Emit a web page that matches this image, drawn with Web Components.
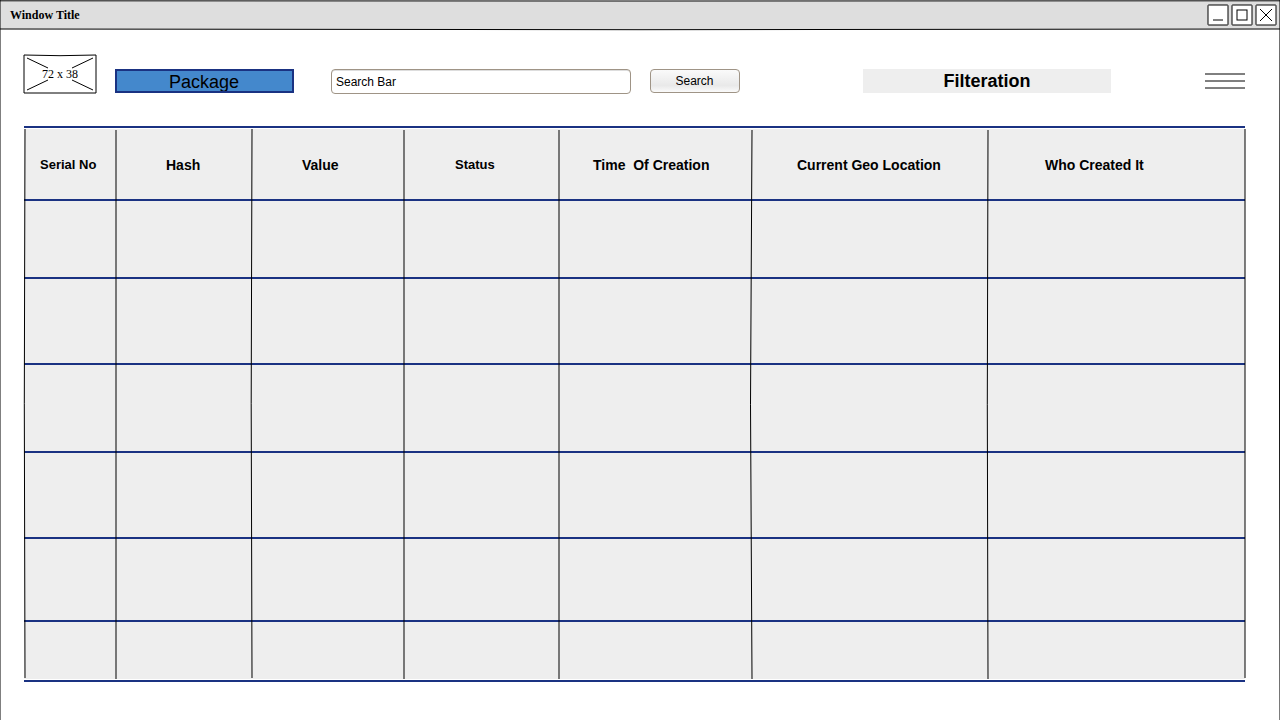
<!DOCTYPE html>
<html lang="en">
<head>
<meta charset="utf-8">
<title>Window Title</title>
<style>
  body { margin: 0; background: #fff; color: #000; font-family: "Liberation Sans", Arial, sans-serif; }
</style>
</head>
<body>
<app-window>
  <title-bar slot="title">Window Title</title-bar>
  <tool-bar>
    <image-placeholder label="72 x 38"></image-placeholder>
    <action-button kind="primary">Package</action-button>
    <search-box label="Search Bar"></search-box>
    <action-button kind="small">Search</action-button>
    <action-button kind="filter">Filteration</action-button>
    <menu-button></menu-button>
  </tool-bar>
  <package-table></package-table>
</app-window>

<script>
class BaseElement extends HTMLElement {
  constructor() {
    super();
    this.attachShadow({ mode: "open" }).innerHTML = this.template();
  }
}

customElements.define("app-window", class extends BaseElement {
  template() {
    return `
      <style>
        :host { display: block; position: relative; min-height: 100vh; overflow: hidden; }
        main { display: flex; flex-direction: column; gap: 32px; padding: 24px 35px 38px 24px; }
        .frame { position: absolute; inset: 0; width: 100%; height: 100%; pointer-events: none; }
        path { fill: none; stroke: #000; }
      </style>
      <slot name="title"></slot>
      <main><slot></slot></main>
      <svg class="frame" viewBox="0 0 1280 720" preserveAspectRatio="none" aria-hidden="true">
        <path d="M0 0V720M1280 0Q1279 360 1280 720"/>
      </svg>`;
  }
});

customElements.define("title-bar", class extends BaseElement {
  template() {
    return `
      <style>
        :host { display: block; position: relative; height: 30px; }
        .shape { position: absolute; inset: 0; width: 100%; height: 100%; overflow: visible; }
        header { position: relative; display: flex; align-items: center; justify-content: space-between; height: 30px; padding: 0 3px 0 10px; box-sizing: border-box; }
        h1 { margin: 0; font: bold 12px/14px "Liberation Serif", "Times New Roman", serif; }
        nav { display: flex; gap: 2px; }
        button { display: block; width: 22px; height: 22px; padding: 0; border: 0; background: none; }
        button svg { display: block; fill: none; stroke: #000; }
        rect.box { fill: #fff; }
      </style>
      <svg class="shape" viewBox="0 0 1280 30" preserveAspectRatio="none" aria-hidden="true">
        <path d="M0 1H1280V29Q640 30.2 0 29Z" fill="#dedede"/>
        <path d="M0 .8Q640 1.2 1280 .8M0 29Q640 30.4 1280 29" fill="none" stroke="#000"/>
      </svg>
      <header>
        <h1><slot></slot></h1>
        <nav>
          <button type="button" aria-label="Minimize"><svg width="22" height="22"><rect class="box" x="1" y="1" width="20" height="20" rx=".5"/><path d="M6 16H16"/></svg></button>
          <button type="button" aria-label="Maximize"><svg width="22" height="22"><rect class="box" x="1" y="1" width="20" height="20" rx=".5"/><rect x="6" y="6" width="10" height="10"/></svg></button>
          <button type="button" aria-label="Close"><svg width="22" height="22"><rect class="box" x="1" y="1" width="20" height="20" rx=".5"/><path d="M5 5L17 17M17 5L5 17"/></svg></button>
        </nav>
      </header>`;
  }
});

customElements.define("tool-bar", class extends BaseElement {
  template() {
    return `
      <style>
        :host { display: grid; align-items: start;
          grid-template-columns: 73px 18px 179px 37px 300px 19px 90px 123fr 248px 94fr 40px; }
        ::slotted(*) { margin-top: 15px; }
        ::slotted(:nth-child(1)) { grid-column: 1; margin-top: 0; }
        ::slotted(:nth-child(2)) { grid-column: 3; }
        ::slotted(:nth-child(3)) { grid-column: 5; }
        ::slotted(:nth-child(4)) { grid-column: 7; }
        ::slotted(:nth-child(5)) { grid-column: 9; }
        ::slotted(:nth-child(6)) { grid-column: 11; }
      </style>
      <slot></slot>`;
  }
});

customElements.define("image-placeholder", class extends BaseElement {
  template() {
    return `
      <style>
        :host { display: block; height: 40px; }
        svg { display: block; fill: none; stroke: #000; overflow: visible; }
        text { fill: #000; stroke: none; font: 12px "Liberation Serif", "Times New Roman", serif; text-anchor: middle; }
      </style>
      <svg width="73" height="40" role="img">
        <path d="M0 1Q36 2.4 72 1V39H0Z"/>
        <path d="M3 4L24 14M69 4L48 14M3 36L24 26M69 36L48 26"/>
        <text x="36" y="24">${this.getAttribute("label")}</text>
      </svg>`;
  }
});

customElements.define("action-button", class extends BaseElement {
  template() {
    return `
      <style>
        :host { display: block; }
        button { display: block; width: 100%; height: 24px; margin: 0; padding: 0; box-sizing: border-box; border: 0; color: #000; text-align: center; font: 18px/20px "Liberation Sans", Arial, sans-serif; }
        :host([kind="primary"]) button { background: #4488cc; border: 2px solid #1a3282; }
        :host([kind="small"]) button { padding-right: 1px; border: 1px solid #9f9486; border-radius: 4px; background: linear-gradient(#fafafa, #eeeeee 50%, #e9e9e9 70%, #fafafa); font-size: 12px; }
        :host([kind="filter"]) button { background: #eee; font-weight: bold; }
        :host([kind="primary"]) span { display: block; height: 19px; padding-right: 1px; overflow: hidden; }
      </style>
      <button type="button"><span><slot></slot></span></button>`;
  }
});

customElements.define("search-box", class extends BaseElement {
  template() {
    const label = this.getAttribute("label");
    return `
      <style>
        :host { display: block; }
        input { display: block; width: 100%; height: 25px; box-sizing: border-box; margin: 0; padding: 1px 4px 0; border: 1px solid #9f9486; border-radius: 4px; background: #fff; box-shadow: inset 0 1px #ddd; color: #000; font: 12px "Liberation Sans", Arial, sans-serif; outline: 0; }
      </style>
      <input type="text" aria-label="${label}" value="${label}">`;
  }
});

customElements.define("menu-button", class extends BaseElement {
  template() {
    return `
      <style>
        :host { display: block; }
        button { display: block; width: 40px; height: 24px; padding: 0; border: 0; background: none; }
        svg { display: block; stroke: #000; }
      </style>
      <button type="button" aria-label="Menu"><svg width="40" height="24"><path d="M0 5H40M0 12H40M0 19H40"/></svg></button>`;
  }
});

customElements.define("package-table", class extends BaseElement {
  template() {
    // title, column width, text inset, text size
    const columns = [
      ["Serial No", 92, 16, 13],
      ["Hash", 136, 50, 14],
      ["Value", 152, 50, 14],
      ["Status", 155, 51, 13],
      ["Time  Of Creation", 193, 34, 14],
      ["Current Geo Location", 236, 45, 14],
      ["Who Created It", 257, 57, 14]
    ];
    const total = columns.reduce((sum, c) => sum + c[1], 0);
    const rows = [78, 86, 88, 86, 83, 57];
    return `
      <style>
        :host { display: block; position: relative; border: solid #1a3282; border-width: 2px 0; padding: 1px 0; }
        table { width: 100%; table-layout: fixed; border-spacing: 0; background: #eee; }
        tr { height: var(--h); }
        th, td { box-sizing: border-box; padding: 0; border-bottom: 2px solid #1a3282; vertical-align: middle; }
        th { text-align: left; white-space: pre; font-weight: bold; line-height: 18px; padding-top: 2px; }
        tbody tr:last-child td { border-bottom: 0; }
        svg { position: absolute; inset: 1px 0; width: 100%; height: calc(100% - 2px); overflow: visible; pointer-events: none; fill: none; stroke: #000; }
      </style>
      <table>
        <colgroup>${columns.map(c => `<col style="width:${c[1] / total * 100}%">`).join("")}</colgroup>
        <thead><tr style="--h:72px">${columns.map(c => `<th scope="col" style="padding-left:${c[2]}px;font-size:${c[3]}px">${c[0]}</th>`).join("")}</tr></thead>
        <tbody>${rows.map(h => `<tr style="--h:${h}px">${"<td></td>".repeat(columns.length)}</tr>`).join("")}</tbody>
      </table>
      <svg viewBox="0 0 1221 550" preserveAspectRatio="none" aria-hidden="true">
        <path d="M1 0Q-.4 275 1 549M92 1V550M228 0Q226.4 275 228 549M380 1V550M535 1V550M728 1Q725 275 728 550M964 1Q962.6 275 964 550M1221 0V549"/>
      </svg>`;
  }
});
</script>
</body>
</html>
